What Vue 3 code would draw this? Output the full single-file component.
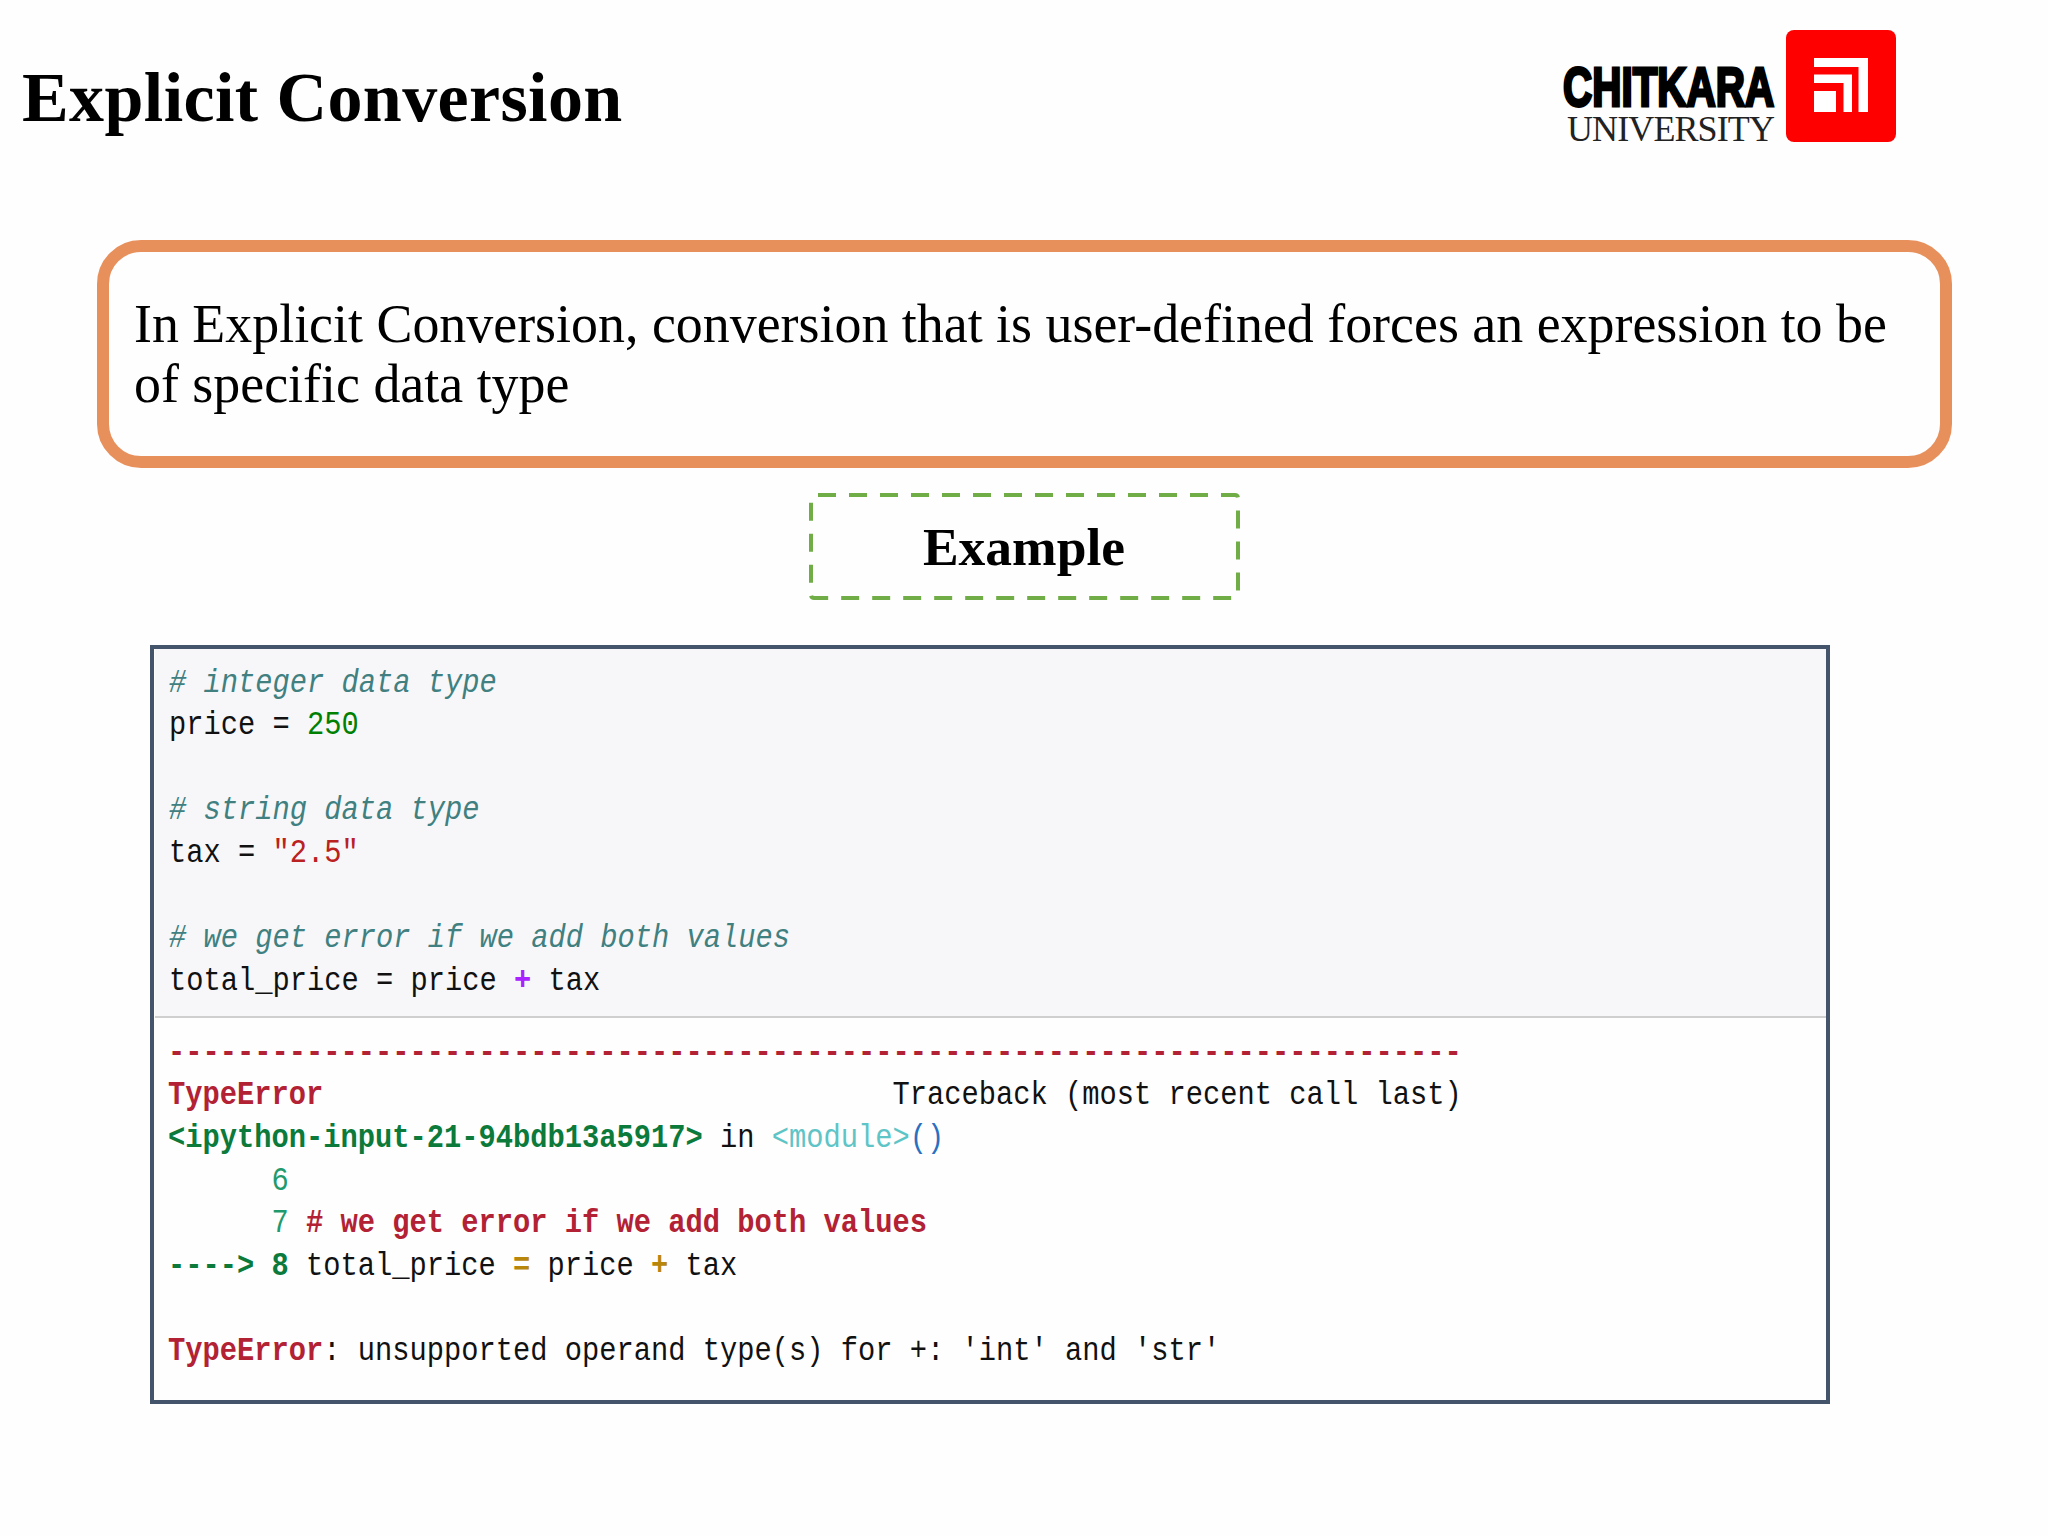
<script setup>
const dashes = '-'.repeat(75)
const gap = ' '.repeat(33)
</script>

<template>
  <div class="slide">
    <header class="header">
      <h1 class="title">Explicit Conversion</h1>
      <div class="logo">
        <div class="wordmark">
          <span class="chitkara">CHITKARA</span>
          <span class="university">UNIVERSITY</span>
        </div>
        <svg class="mark" viewBox="0 0 110 112" width="110" height="112">
          <rect width="110" height="112" rx="8" fill="#fe0000" />
          <path fill="#fff" d="M28 28H82V82H72.500V37H28ZM28 44.500H66V82H57.500V53H28ZM28 61H50V82H28Z" />
        </svg>
      </div>
    </header>

    <section class="definition">
      In Explicit Conversion, conversion that is user-defined forces an expression to be of specific data type
    </section>

    <div class="example">
      <svg class="dash" viewBox="0 0 431 107" width="431" height="107">
        <rect x="2" y="2" width="427" height="103" rx="3" fill="none" stroke="#70ad47" stroke-width="4" stroke-dasharray="18 13" stroke-dashoffset="-4" />
      </svg>
      Example
    </div>

    <section class="code-box">
      <div class="input">
        <pre class="code"><span class="cm"># integer data type</span>
price = <span class="num">250</span>

<span class="cm"># string data type</span>
tax = <span class="str">"2.5"</span>

<span class="cm"># we get error if we add both values</span>
total_price = price <span class="op">+</span> tax</pre>
      </div>
      <div class="output">
        <pre class="code"><span class="err-plain">{{ dashes }}</span>
<span class="err">TypeError</span>{{ gap }}Traceback (most recent call last)
<span class="file">&lt;ipython-input-21-94bdb13a5917&gt;</span> in <span class="mod">&lt;module&gt;</span><span class="paren">()</span>
      <span class="ln">6</span>
      <span class="ln">7</span> <span class="err"># we get error if we add both values</span>
<span class="file">----&gt; 8</span> total_price <span class="gold">=</span> price <span class="gold">+</span> tax

<span class="err">TypeError</span>: unsupported operand type(s) for +: 'int' and 'str'</pre>
      </div>
    </section>
  </div>
</template>

<style>
html, body { margin: 0; background: #fff; }
</style>

<style scoped>
.slide {
  width: 2048px;
  height: 1536px;
  overflow: hidden;
  background: #fefefe;
  font-family: "Liberation Serif", serif;
  color: #000;
}
.header {
  height: 240px;
  box-sizing: border-box;
  display: flex;
  justify-content: space-between;
  align-items: flex-start;
  padding: 30px 152px 0 22px;
}
.title {
  margin: 24px 0 0;
  font-size: 70px;
  line-height: 88px;
  font-weight: 700;
  letter-spacing: 0.4px;
}
.logo { display: flex; align-items: flex-start; gap: 12px; }
.wordmark {
  display: flex;
  flex-direction: column;
  align-items: flex-end;
  padding-top: 31px;
}
.chitkara {
  display: block;
  font-family: "Liberation Sans", sans-serif;
  font-weight: 700;
  font-size: 55px;
  line-height: 52px;
  transform: scaleX(0.735);
  transform-origin: right center;
  -webkit-text-stroke: 3px #000;
  width: 287px;
  text-align: right;
}
.university {
  font-size: 36px;
  line-height: 32px;
  letter-spacing: -0.9px;
  color: #222;
}
.mark { display: block; }
.definition {
  margin-left: 97px;
  width: 1855px;
  height: 228px;
  box-sizing: border-box;
  border: 12px solid #e8905c;
  border-radius: 44px;
  padding: 42px 20px 0 25px;
  font-size: 53.900px;
  line-height: 60px;
}
.example {
  position: relative;
  margin: 25px auto 0;
  width: 431px;
  height: 107px;
  display: flex;
  align-items: center;
  justify-content: center;
  font-size: 53.500px;
  font-weight: 700;
}
.dash { position: absolute; inset: 0; }
.code-box {
  margin: 45px 0 0 150px;
  width: 1680px;
  height: 759px;
  box-sizing: border-box;
  border: 4px solid #44546a;
  display: flex;
  flex-direction: column;
}
.input {
  background: #f7f7f9;
  border-bottom: 2px solid #cfcfcf;
  margin-left: 1px;
  padding: 13.500px 0 12.500px 13.500px;
}
.output { padding: 15px 0 0 13.500px; }
.code {
  margin: 0;
  font-family: "Liberation Mono", monospace;
  font-size: 33px;
  line-height: 42.6px;
  color: #111;
  transform: scaleX(0.871);
  transform-origin: left top;
  width: 1800px;
}
.cm { color: #408080; font-style: italic; }
.num { color: #008000; }
.str { color: #ba2121; }
.op { color: #aa22ff; font-weight: 700; }
.err { color: #b22234; font-weight: 700; }
.err-plain { color: #b22234; font-weight: 700; }
.file { color: #0b7a3b; font-weight: 700; }
.mod { color: #5fc4c6; }
.paren { color: #2a6fc0; }
.ln { color: #1f9a6c; }
.gold { color: #b8860b; font-weight: 700; }
</style>
